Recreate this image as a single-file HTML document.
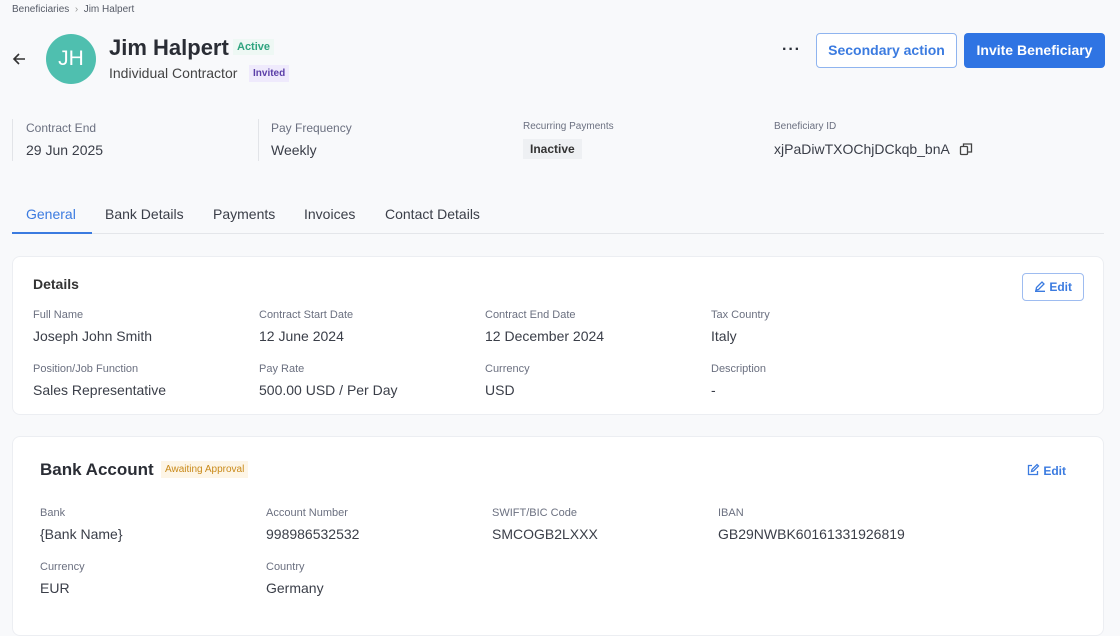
<!DOCTYPE html>
<html><head><meta charset="utf-8"><style>
*{margin:0;padding:0;box-sizing:border-box}
body{width:1120px;height:620px;overflow:hidden;background:#f8f9fb;font-family:"Liberation Sans",sans-serif;color:#2b2f38;position:relative}
.a{position:absolute;white-space:nowrap}
.lbl{font-size:11px;color:#6b7080}
.val{font-size:14px;color:#3a3e48}
.card{position:absolute;left:12px;width:1092px;background:#fff;border:1px solid #eceef2;border-radius:8px}
</style></head><body>
<div class="a" style="left:12px;top:4px;font-size:10px;color:#555a66">Beneficiaries &nbsp;<span style="color:#999">›</span>&nbsp; Jim Halpert</div>
<svg class="a" style="left:11px;top:52px" width="16" height="14" viewBox="0 0 16 14"><path d="M14 7H3M8 2L3 7l5 5" stroke="#333" stroke-width="1.6" fill="none"/></svg>
<div class="a" style="left:46px;top:34px;width:50px;height:50px;border-radius:50%;background:#4fbfaf;color:#fff;font-size:21px;line-height:50px;text-align:center">JH</div>
<div class="a" style="left:109px;top:35px;font-size:22px;font-weight:bold;color:#2a2d35">Jim Halpert</div>
<div class="a" style="left:233px;top:39px;background:#eef8f4;color:#2fa47f;font-size:11px;font-weight:bold;padding:2px 4px">Active</div>
<div class="a" style="left:109px;top:65px;font-size:14px;color:#444">Individual Contractor</div>
<div class="a" style="left:249px;top:65px;background:#efeafc;color:#5b3fa8;font-size:10px;font-weight:bold;padding:3px 4px">Invited</div>
<div class="a" style="left:782px;top:41px;font-size:16px;font-weight:bold;letter-spacing:1px">···</div>
<div class="a" style="left:816px;top:33px;width:141px;height:35px;border:1px solid #8fb4ef;border-radius:4px;background:#fff;color:#3b7be0;font-size:14px;font-weight:bold;line-height:33px;text-align:center">Secondary action</div>
<div class="a" style="left:964px;top:33px;width:141px;height:35px;border-radius:4px;background:#2f74e3;color:#fff;font-size:14px;font-weight:bold;line-height:35px;text-align:center">Invite Beneficiary</div>

<div class="a" style="left:12px;top:119px;width:1px;height:42px;background:#e2e4e8"></div>
<div class="a" style="left:258px;top:119px;width:1px;height:42px;background:#e2e4e8"></div>
<div class="a lbl" style="left:26px;top:121px;font-size:12px">Contract End</div>
<div class="a val" style="left:26px;top:142px">29 Jun 2025</div>
<div class="a lbl" style="left:271px;top:121px;font-size:12px">Pay Frequency</div>
<div class="a val" style="left:271px;top:142px">Weekly</div>
<div class="a lbl" style="left:523px;top:121px;font-size:10px">Recurring Payments</div>
<div class="a" style="left:523px;top:139px;background:#eef0f3;font-size:12px;font-weight:bold;color:#333;padding:3px 7px">Inactive</div>
<div class="a lbl" style="left:774px;top:121px;font-size:10px">Beneficiary ID</div>
<div class="a val" style="left:774px;top:141px">xjPaDiwTXOChjDCkqb_bnA</div>
<svg class="a" style="left:959px;top:142px" width="14" height="14" viewBox="0 0 14 14" fill="none" stroke="#444" stroke-width="1.3"><rect x="1.5" y="4.5" width="7" height="8" rx="1"/><path d="M4.5 4.5V2h8v8h-4"/></svg>

<div class="a" style="left:26px;top:206px;font-size:14px;color:#3b7be0">General</div>
<div class="a" style="left:105px;top:206px;font-size:14px;color:#3a3e48">Bank Details</div>
<div class="a" style="left:213px;top:206px;font-size:14px;color:#3a3e48">Payments</div>
<div class="a" style="left:304px;top:206px;font-size:14px;color:#3a3e48">Invoices</div>
<div class="a" style="left:385px;top:206px;font-size:14px;color:#3a3e48">Contact Details</div>
<div class="a" style="left:12px;top:233px;width:1092px;height:1px;background:#e4e6ea"></div>
<div class="a" style="left:12px;top:232px;width:80px;height:2px;background:#3b7be0"></div>

<div class="card" style="top:256px;height:159px">
<div class="a" style="left:20px;top:19px;font-size:14px;font-weight:bold;color:#333">Details</div>
<div class="a" style="left:1009px;top:16px;width:62px;height:28px;border:1px solid #9ebcf0;border-radius:4px;color:#3b7be0;font-size:12px;font-weight:bold;line-height:26px;text-align:center"><svg width="12" height="12" viewBox="0 0 12 12" style="vertical-align:-1px" fill="none" stroke="#3b7be0" stroke-width="1.3"><path d="M2 10l.5-2.5L8 2l2 2-5.5 5.5z M1 11.3h10"/></svg> Edit</div>
</div>
<div class="a lbl" style="left:33px;top:309px">Full Name</div><div class="a val" style="left:33px;top:328px">Joseph John Smith</div>
<div class="a lbl" style="left:259px;top:309px">Contract Start Date</div><div class="a val" style="left:259px;top:328px">12 June 2024</div>
<div class="a lbl" style="left:485px;top:309px">Contract End Date</div><div class="a val" style="left:485px;top:328px">12 December 2024</div>
<div class="a lbl" style="left:711px;top:309px">Tax Country</div><div class="a val" style="left:711px;top:328px">Italy</div>
<div class="a lbl" style="left:33px;top:363px">Position/Job Function</div><div class="a val" style="left:33px;top:382px">Sales Representative</div>
<div class="a lbl" style="left:259px;top:363px">Pay Rate</div><div class="a val" style="left:259px;top:382px">500.00 USD / Per Day</div>
<div class="a lbl" style="left:485px;top:363px">Currency</div><div class="a val" style="left:485px;top:382px">USD</div>
<div class="a lbl" style="left:711px;top:363px">Description</div><div class="a val" style="left:711px;top:382px">-</div>

<div class="card" style="top:436px;height:200px"></div>
<div class="a" style="left:40px;top:460px;font-size:17px;font-weight:bold;color:#2a2d35">Bank Account</div>
<div class="a" style="left:161px;top:461px;background:#fdf5e6;color:#c98a1a;font-size:10px;padding:3px 4px">Awaiting Approval</div>
<div class="a" style="left:1026px;top:463px;color:#3b7be0;font-size:12px;font-weight:bold"><svg width="14" height="14" viewBox="0 0 14 14" style="vertical-align:-2px" fill="none" stroke="#3b7be0" stroke-width="1.3"><path d="M6 2.5H2.5v9h9V8"/><path d="M5.5 8.5l.5-2L11 1.5l1.5 1.5-5 5z"/></svg> Edit</div>
<div class="a lbl" style="left:40px;top:507px">Bank</div><div class="a val" style="left:40px;top:526px">{Bank Name}</div>
<div class="a lbl" style="left:266px;top:507px">Account Number</div><div class="a val" style="left:266px;top:526px">998986532532</div>
<div class="a lbl" style="left:492px;top:507px">SWIFT/BIC Code</div><div class="a val" style="left:492px;top:526px">SMCOGB2LXXX</div>
<div class="a lbl" style="left:718px;top:507px">IBAN</div><div class="a val" style="left:718px;top:526px">GB29NWBK60161331926819</div>
<div class="a lbl" style="left:40px;top:561px">Currency</div><div class="a val" style="left:40px;top:580px">EUR</div>
<div class="a lbl" style="left:266px;top:561px">Country</div><div class="a val" style="left:266px;top:580px">Germany</div>
</body></html>
